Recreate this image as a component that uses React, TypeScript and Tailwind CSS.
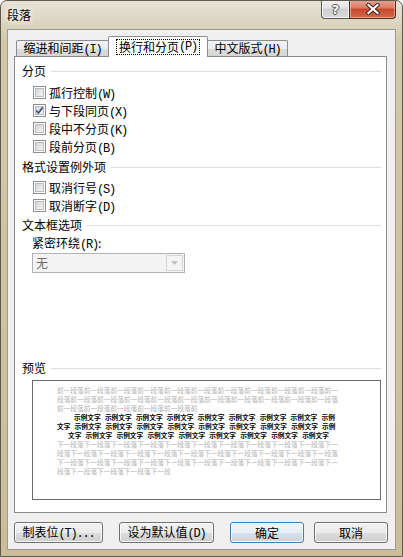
import React from "react";

function Key({ k }: { k: string }) {
  return (
    <span className="font-['Liberation_Mono',monospace] text-[12px] tracking-[-1.2px]">
      ({k})
    </span>
  );
}

function Header({ text, className = "" }: { text: string; className?: string }) {
  return (
    <div className={"flex items-center h-[14px] ml-[7px] mr-[5px] " + className}>
      <span className="leading-[14px]">{text}</span>
      <div className="flex-1 h-px bg-[#d5dfe5] ml-[5px]" />
    </div>
  );
}

function CheckBox({ checked = false }: { checked?: boolean }) {
  return (
    <div className="relative w-[13px] h-[13px] mt-[2px] border border-[#8e8f8f] bg-white p-[1px] shrink-0">
      <div className="w-full h-full border border-[#b8bcc1] bg-[linear-gradient(135deg,#d4d6d9,#f4f4f4)]" />
      {checked && (
        <svg className="absolute left-0 top-0" width="11" height="11" viewBox="0 0 11 11">
          <path d="M2.2 5.6 L4.4 8 L8.8 2.4" fill="none" stroke="#3f5487" strokeWidth="1.7" />
        </svg>
      )}
    </div>
  );
}

function CheckRow({ label, k, checked }: { label: string; k: string; checked?: boolean }) {
  return (
    <div className="flex items-start h-[18px] ml-[18px]">
      <CheckBox checked={checked} />
      <span className="ml-[3px] leading-[17px]">
        {label}
        <Key k={k} />
      </span>
    </div>
  );
}

function Btn({ children, w, def = false }: { children: React.ReactNode; w: string; def?: boolean }) {
  return (
    <div
      className={
        "h-[21px] rounded-[3px] border flex items-center justify-center leading-none shadow-[inset_0_0_0_1px_rgba(255,255,255,0.8)] " +
        w +
        (def
          ? " border-[#3c7fb1] bg-[linear-gradient(to_bottom,#eef4f9_0%,#e6eef5_50%,#d6e1ec_50%,#cad6e2_100%)] shadow-[inset_0_0_0_1px_#9fdcf7,inset_0_0_2px_1px_#c8ecfb]"
          : " border-[#707070] bg-[linear-gradient(to_bottom,#f2f2f2_0%,#ebebeb_50%,#dddddd_50%,#cfcfcf_100%)]")
      }
    >
      {children}
    </div>
  );
}

const prev = "前一段落".repeat(40);
const next = "下一段落".repeat(40);

function Group({ t }: { t: string }) {
  return <span>{t}</span>;
}

export default function App() {
  const groups8 = Array.from({ length: 8 }).map((_, i) => <Group key={i} t="示例文字" />);
  return (
    <div className="w-[403px] h-[557px] flex flex-col rounded-t-[7px] border border-[#5f5a4e] bg-[linear-gradient(to_bottom,#e6e2d7_0px,#ddd6c3_20px,#d3c8aa_40px,#cbbd98_100%)] text-[12px] text-black font-['Noto_Sans_CJK_SC',sans-serif] overflow-hidden">
      {/* title bar */}
      <div className="h-[28px] flex items-start shrink-0">
        <div className="ml-[6px] mt-[7px] leading-[14px] text-[12px] [text-shadow:0_0_5px_#fff,0_0_8px_#fff]">段落</div>
        <div className="ml-auto mr-[6px] -mt-px flex">
          <div className="w-[28px] h-[19px] rounded-bl-[4px] border border-[#555] border-t-0 border-r-0 bg-[linear-gradient(to_bottom,#f1f1f1_0%,#e4e4e4_45%,#cfcfcf_50%,#d9d9d9_100%)] shadow-[inset_0_0_0_1px_rgba(255,255,255,0.7)] flex items-center justify-center">
            <span className="font-['DejaVu_Sans',sans-serif] font-bold text-[13px] leading-none text-white [text-shadow:1px_0_#555,-1px_0_#555,0_1px_#555,0_-1px_#555]">?</span>
          </div>
          <div className="w-[47px] h-[19px] rounded-br-[4px] border border-[#4d2a22] border-t-0 bg-[linear-gradient(to_bottom,#e8a493_0%,#d87a62_45%,#c7472d_50%,#d46a4d_100%)] shadow-[inset_0_0_0_1px_rgba(255,220,210,0.5)] flex items-center justify-center">
            <svg width="14" height="12" viewBox="0 0 14 12">
              <path d="M2.5 2 L11.5 10 M11.5 2 L2.5 10" stroke="#3b2520" strokeWidth="4.2" strokeLinecap="square" />
              <path d="M2.5 2 L11.5 10 M11.5 2 L2.5 10" stroke="#ffffff" strokeWidth="2.2" strokeLinecap="square" />
            </svg>
          </div>
        </div>
      </div>

      {/* client area */}
      <div className="ml-[6px] w-[389px] h-[521px] border border-[#9c9a94] bg-[#f0f0f0] flex flex-col shrink-0">
        <div className="pt-[6px]">
          {/* tabs */}
          <div className="ml-[8px] h-[20px] flex items-end">
            <div className="w-[93px] h-[16px] border border-b-0 border-[#898c95] rounded-t-[2px] bg-[linear-gradient(to_bottom,#f3f3f3_0%,#ebebeb_50%,#dddddd_50%,#d5d5d5_100%)] flex items-center justify-center leading-none">
              <span>缩进和间距<Key k="I" /></span>
            </div>
            <div className="relative z-10 -ml-px w-[100px] h-[21px] -mb-px border border-b-0 border-[#898c95] rounded-t-[2px] bg-white flex items-start justify-center pt-[2px]">
              <span className="border border-dotted border-black px-[2px] h-[16px] leading-[14px] flex items-center">换行和分页<Key k="P" /></span>
            </div>
            <div className="-ml-px w-[81px] h-[16px] border border-b-0 border-[#898c95] rounded-t-[2px] bg-[linear-gradient(to_bottom,#f3f3f3_0%,#ebebeb_50%,#dddddd_50%,#d5d5d5_100%)] flex items-center justify-center leading-none">
              <span>中文版式<Key k="H" /></span>
            </div>
          </div>

          {/* panel */}
          <div className="ml-[6px] w-[373px] h-[457px] border border-[#898c95] bg-white flex flex-col">
            <Header text="分页" className="mt-[7px]" />
            <div className="mt-[6px]">
              <CheckRow label="孤行控制" k="W" />
              <CheckRow label="与下段同页" k="X" checked />
              <CheckRow label="段中不分页" k="K" />
              <CheckRow label="段前分页" k="B" />
            </div>
            <Header text="格式设置例外项" className="mt-[4px]" />
            <div className="mt-[5px]">
              <CheckRow label="取消行号" k="S" />
              <CheckRow label="取消断字" k="D" />
            </div>
            <Header text="文本框选项" className="mt-[3px]" />
            <div className="mt-[4px] ml-[17px] h-[14px] leading-[14px]">
              紧密环绕<Key k="R" />:
            </div>
            <div className="mt-[3px] ml-[17px] w-[153px] h-[20px] border border-[#afb3b7] bg-[#f4f4f4] flex items-center">
              <span className="ml-[3px] text-[#6d6d6d] leading-none">无</span>
              <div className="ml-auto mr-px w-[17px] h-[16px] border border-[#d5d5d5] bg-[#f4f4f4] flex items-center justify-center">
                <svg width="7" height="4" viewBox="0 0 7 4">
                  <path d="M0 0 H7 L3.5 4 Z" fill="#c2c2c2" />
                </svg>
              </div>
            </div>

            <Header text="预览" className="mt-[88px]" />
            <div className="mt-[5px] ml-[17px] w-[349px] h-[120px] border border-[#6a6a6a] bg-white pt-[5px] pl-[24px] text-[6.7px] leading-[9px] whitespace-nowrap">
              <div className="text-[#b4b4b4]">
                <div>{prev.slice(0, 42)}</div>
                <div>{prev.slice(42, 84)}</div>
                <div>{prev.slice(84, 105)}</div>
              </div>
              <div className="text-black font-bold">
                <div className="flex gap-[4.2px] ml-[17px]">
                  {groups8}
                  <span>示例</span>
                </div>
                <div className="flex gap-[4.2px]">
                  <span>文字</span>
                  {groups8}
                  <span>示例</span>
                </div>
                <div className="flex gap-[4.2px] ml-[11px]">
                  <span>文字</span>
                  {groups8}
                </div>
              </div>
              <div className="text-[#b4b4b4]">
                <div>{next.slice(0, 42)}</div>
                <div>{next.slice(42, 84)}</div>
                <div>{next.slice(84, 126)}</div>
                <div>{next.slice(126, 143)}</div>
              </div>
            </div>
          </div>

          {/* buttons */}
          <div className="mt-[9px] ml-[6px] flex">
            <Btn w="w-[89px]">
              <span>制表位<Key k="T" /><span className="font-['Liberation_Mono',monospace] text-[12px] tracking-[-1.2px]">...</span></span>
            </Btn>
            <div className="w-[16px]" />
            <Btn w="w-[95px]">
              <span>设为默认值<Key k="D" /></span>
            </Btn>
            <div className="w-[16px]" />
            <Btn w="w-[74px]" def>
              <span>确定</span>
            </Btn>
            <div className="w-[10px]" />
            <Btn w="w-[74px]">
              <span>取消</span>
            </Btn>
          </div>
        </div>
      </div>
    </div>
  );
}
